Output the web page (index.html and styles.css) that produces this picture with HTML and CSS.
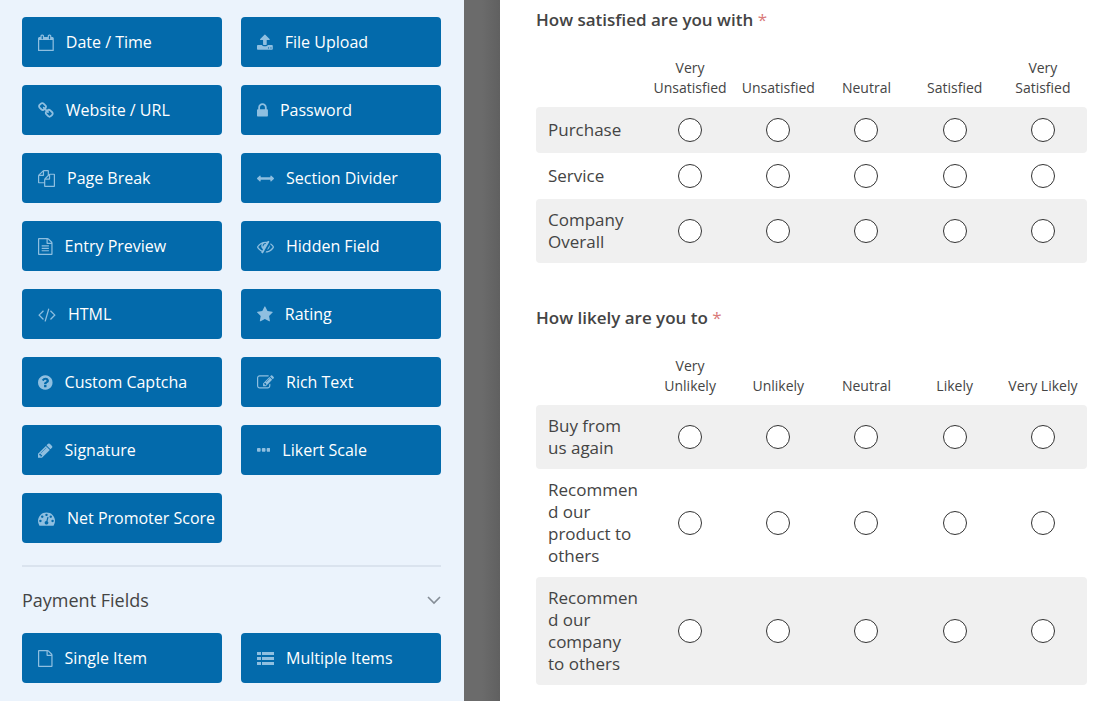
FILE: index.html
```html
<!DOCTYPE html>
<html lang="en">
<head>
    <meta charset="UTF-8">
    <meta name="viewport" content="width=device-width, initial-scale=1.0">
    <title>Form Builder</title>
    <link rel="stylesheet" href="styles.css">
</head>
<body>
    <div class="builder">
        <aside class="sidebar">
            <div class="field-grid">
                <button type="button" class="field-button">
                    <svg class="icon" viewBox="64 0 1664 1792" aria-hidden="true"><path d="M192 1664h1408v-1024h-1408v1024zm384-1152v-288q0-14-9-23t-23-9h-64q-14 0-23 9t-9 23v288q0 14 9 23t23 9h64q14 0 23-9t9-23zm768 0v-288q0-14-9-23t-23-9h-64q-14 0-23 9t-9 23v288q0 14 9 23t23 9h64q14 0 23-9t9-23zm384-64v1280q0 52-38 90t-90 38h-1408q-52 0-90-38t-38-90v-1280q0-52 38-90t90-38h128v-96q0-66 47-113t113-47h64q66 0 113 47t47 113v96h384v-96q0-66 47-113t113-47h64q66 0 113 47t47 113v96h128q52 0 90 38t38 90z"/></svg>
                    Date / Time
                </button>
                <button type="button" class="field-button">
                    <svg class="icon" viewBox="64 0 1664 1792" aria-hidden="true"><path d="M1344 1472q0-26-19-45t-45-19-45 19-19 45 19 45 45 19 45-19 19-45zm256 0q0-26-19-45t-45-19-45 19-19 45 19 45 45 19 45-19 19-45zm128-224v320q0 40-28 68t-68 28h-1472q-40 0-68-28t-28-68v-320q0-40 28-68t68-28h427q21 56 70.5 92t110.5 36h256q61 0 110.5-36t70.5-92h427q40 0 68 28t28 68zm-325-648q-17 40-59 40h-256v448q0 26-19 45t-45 19h-256q-26 0-45-19t-19-45v-448h-256q-42 0-59-40-17-39 14-69l448-448q18-19 45-19t45 19l448 448q31 30 14 69z"/></svg>
                    File Upload
                </button>
                <button type="button" class="field-button">
                    <svg class="icon" viewBox="64 0 1664 1792" aria-hidden="true"><path d="M1520 1216q0-40-28-68l-208-208q-28-28-68-28-42 0-72 32 3 3 19 18.5t21.5 21.5 15 19 13 25.5 3.5 27.5q0 40-28 68t-68 28q-15 0-27.5-3.5t-25.5-13-19-15-21.5-21.5-18.5-19q-33 31-33 73 0 40 28 68l206 207q27 27 68 27 40 0 68-26l147-146q28-28 28-67zm-703-705q0-40-28-68l-206-207q-28-28-68-28-39 0-68 27l-147 146q-28 28-28 67 0 40 28 68l208 208q27 27 68 27 42 0 72-31-3-3-19-18.5t-21.5-21.5-15-19-13-25.5-3.5-27.5q0-40 28-68t68-28q15 0 27.5 3.5t25.5 13 19 15 21.5 21.5 18.5 19q33-31 33-73zm895 705q0 120-85 203l-147 146q-83 83-203 83-121 0-204-85l-206-207q-83-83-83-203 0-123 88-209l-88-88q-86 88-208 88-120 0-204-84l-208-208q-84-84-84-204t85-203l147-146q83-83 203-83 121 0 204 85l206 207q83 83 83 203 0 123-88 209l88 88q86-88 208-88 120 0 204 84l208 208q84 84 84 204z"/></svg>
                    Website / URL
                </button>
                <button type="button" class="field-button">
                    <svg class="icon" viewBox="320 0 1152 1792" aria-hidden="true"><path d="M640 768h512v-192q0-106-75-181t-181-75-181 75-75 181v192zm832 96v576q0 40-28 68t-68 28h-960q-40 0-68-28t-28-68v-576q0-40 28-68t68-28h32v-192q0-184 132-316t316-132 316 132 132 316v192h32q40 0 68 28t28 68z"/></svg>
                    Password
                </button>
                <button type="button" class="field-button">
                    <svg class="icon" viewBox="0 0 1792 1792" aria-hidden="true"><path d="M1696 384q40 0 68 28t28 68v1216q0 40-28 68t-68 28h-960q-40 0-68-28t-28-68v-288h-544q-40 0-68-28t-28-68v-672q0-40 20-88t48-76l408-408q28-28 76-48t88-20h416q40 0 68 28t28 68v328q68-40 128-40h416zm-544 213l-299 299h299v-299zm-640-384l-299 299h299v-299zm196 647l316-316v-416h-384v416q0 40-28 68t-68 28h-416v640h512v-256q0-40 20-88t48-76zm956 804v-1152h-384v416q0 40-28 68t-68 28h-416v640h896z"/></svg>
                    Page Break
                </button>
                <button type="button" class="field-button">
                    <svg class="icon" viewBox="0 0 1792 1792" aria-hidden="true"><path d="M1792 896q0 26-19 45l-256 256q-19 19-45 19t-45-19-19-45v-128h-1024v128q0 26-19 45t-45 19-45-19l-256-256q-19-19-19-45t19-45l256-256q19-19 45-19t45 19 19 45v128h1024v-128q0-26 19-45t45-19 45 19l256 256q19 19 19 45z"/></svg>
                    Section Divider
                </button>
                <button type="button" class="field-button">
                    <svg class="icon" viewBox="128 0 1536 1792" aria-hidden="true"><path d="M1596 380q28 28 48 76t20 88v1152q0 40-28 68t-68 28h-1344q-40 0-68-28t-28-68v-1600q0-40 28-68t68-28h896q40 0 88 20t76 48zm-444-244v376h376q-10-29-22-41l-313-313q-12-12-41-22zm384 1528v-1024h-416q-40 0-68-28t-28-68v-416h-768v1536h1280zm-1024-864q0-14 9-23t23-9h704q14 0 23 9t9 23v64q0 14-9 23t-23 9h-704q-14 0-23-9t-9-23v-64zm736 224q14 0 23 9t9 23v64q0 14-9 23t-23 9h-704q-14 0-23-9t-9-23v-64q0-14 9-23t23-9h704zm0 256q14 0 23 9t9 23v64q0 14-9 23t-23 9h-704q-14 0-23-9t-9-23v-64q0-14 9-23t23-9h704z"/></svg>
                    Entry Preview
                </button>
                <button type="button" class="field-button">
                    <svg class="icon" viewBox="0 0 1792 1792" aria-hidden="true"><path d="M555 1335l78-141q-87-63-136-159t-49-203q0-121 61-225-229 117-381 353 167 258 427 375zm389-759q0-20-14-34t-34-14q-125 0-214.5 89.5t-89.5 214.5q0 20 14 34t34 14 34-14 14-34q0-86 61-147t147-61q20 0 34-14t14-34zm363-191q0 7-1 9-106 189-316 567t-315 566l-49 89q-10 16-28 16-12 0-134-70-16-10-16-28 0-12 44-87-143-65-263.5-173t-208.5-245q-20-31-20-69t20-69q153-235 380-371t496-136q89 0 180 17l54-97q10-16 28-16 5 0 18 6t31 15.5 33 18.5 31.5 18.5 19.5 11.5q16 10 16 27zm37 447q0 139-79 253.5t-209 164.5l280-502q8 45 8 84zm448 128q0 35-20 69-39 64-109 145-150 172-347.5 267t-419.5 95l74-132q212-18 392.5-137t301.5-307q-115-179-282-294l63-112q95 64 182.5 153t144.5 184q20 34 20 69z"/></svg>
                    Hidden Field
                </button>
                <button type="button" class="field-button">
                    <svg class="icon" viewBox="-48 0 1888 1792" aria-hidden="true"><path d="M553 1399l-50 50q-10 10-23 10t-23-10l-466-466q-10-10-10-23t10-23l466-466q10-10 23-10t23 10l50 50q10 10 10 23t-10 23l-393 393 393 393q10 10 10 23t-10 23zm591-1067l-373 1291q-4 13-15.5 19.5t-23.5 2.5l-62-17q-13-4-19.5-15.5t-2.5-24.5l373-1291q4-13 15.5-19.5t23.5-2.5l62 17q13 4 19.5 15.5t2.5 24.5zm657 651l-466 466q-10 10-23 10t-23-10l-50-50q-10-10-10-23t10-23l393-393-393-393q-10-10-10-23t10-23l50-50q10-10 23-10t23 10l466 466q10 10 10 23t-10 23z"/></svg>
                    HTML
                </button>
                <button type="button" class="field-button">
                    <svg class="icon" viewBox="64 0 1664 1792" aria-hidden="true"><path d="M1728 647q0 22-26 48l-363 354 86 500q1 7 1 20 0 21-10.5 35.5t-30.5 14.5q-19 0-40-12l-449-236-449 236q-22 12-40 12-21 0-31.5-14.5t-10.5-35.5q0-6 2-20l86-500-364-354q-25-27-25-48 0-37 56-46l502-73 225-455q19-41 49-41t49 41l225 455 502 73q56 9 56 46z"/></svg>
                    Rating
                </button>
                <button type="button" class="field-button">
                    <svg class="icon" viewBox="128 0 1536 1792" aria-hidden="true"><path d="M1024 1376v-192q0-14-9-23t-23-9h-192q-14 0-23 9t-9 23v192q0 14 9 23t23 9h192q14 0 23-9t9-23zm256-672q0-88-55.5-163t-138.5-116-170-41q-243 0-371 213-15 24 8 42l132 100q7 6 19 6 16 0 25-12 53-68 86-92 34-24 86-24 48 0 85.5 26t37.5 59q0 38-20 61t-68 45q-63 28-115.5 86.5t-52.5 125.5v36q0 14 9 23t23 9h192q14 0 23-9t9-23q0-19 21.5-49.5t54.5-49.5q32-18 49-28.5t46-35 44.5-48 28-60.5 12.5-81zm384 192q0 209-103 385.5t-279.5 279.5-385.5 103-385.5-103-279.5-279.5-103-385.5 103-385.5 279.5-279.5 385.5-103 385.5 103 279.5 279.5 103 385.5z"/></svg>
                    Custom Captcha
                </button>
                <button type="button" class="field-button">
                    <svg class="icon" viewBox="0 0 1792 1792" aria-hidden="true"><path d="M888 1184l116-116-152-152-116 116v56h96v96h56zm440-720q-16-16-33 1l-350 350q-17 17-1 33t33-1l350-350q17-17 1-33zm80 594v190q0 119-84.5 203.5t-203.5 84.5h-832q-119 0-203.5-84.5t-84.5-203.5v-832q0-119 84.5-203.5t203.5-84.5h832q63 0 117 25 15 7 18 23 3 17-9 29l-49 49q-14 14-32 8-23-6-45-6h-832q-66 0-113 47t-47 113v832q0 66 47 113t113 47h832q66 0 113-47t47-113v-126q0-13 9-22l64-64q15-15 35-7t20 29zm-96-738l288 288-672 672h-288v-288zm444 132l-92 92-288-288 92-92q28-28 68-28t68 28l152 152q28 28 28 68t-28 68z"/></svg>
                    Rich Text
                </button>
                <button type="button" class="field-button">
                    <svg class="icon" viewBox="128 0 1536 1792" aria-hidden="true"><path d="M491 1536l91-91-235-235-91 91v107h128v128h107zm523-928q0-22-22-22-10 0-17 7l-542 542q-7 7-7 17 0 22 22 22 10 0 17-7l542-542q7-7 7-17zm-54-192l416 416-832 832h-416v-416zm683 96q0 53-37 90l-166 166-416-416 166-165q36-38 90-38 53 0 91 38l235 234q37 39 37 91z"/></svg>
                    Signature
                </button>
                <button type="button" class="field-button">
                    <svg class="icon" viewBox="192 0 1408 1792" aria-hidden="true"><path d="M576 736v192q0 40-28 68t-68 28h-192q-40 0-68-28t-28-68v-192q0-40 28-68t68-28h192q40 0 68 28t28 68zm512 0v192q0 40-28 68t-68 28h-192q-40 0-68-28t-28-68v-192q0-40 28-68t68-28h192q40 0 68 28t28 68zm512 0v192q0 40-28 68t-68 28h-192q-40 0-68-28t-28-68v-192q0-40 28-68t68-28h192q40 0 68 28t28 68z"/></svg>
                    Likert Scale
                </button>
                <button type="button" class="field-button">
                    <svg class="icon" viewBox="0 0 1792 1792" aria-hidden="true"><path d="M384 1152q0-53-37.5-90.5t-90.5-37.5-90.5 37.5-37.5 90.5 37.5 90.5 90.5 37.5 90.5-37.5 37.5-90.5zm192-448q0-53-37.5-90.5t-90.5-37.5-90.5 37.5-37.5 90.5 37.5 90.5 90.5 37.5 90.5-37.5 37.5-90.5zm428 481l101-382q6-26-7.5-48.5t-38.5-29.5-48 6.5-30 39.5l-101 382q-60 5-107 43.5t-63 98.5q-20 77 20 146t117 89 146-20 89-117q16-60-6-117t-72-91zm660-33q0-53-37.5-90.5t-90.5-37.5-90.5 37.5-37.5 90.5 37.5 90.5 90.5 37.5 90.5-37.5 37.5-90.5zm-640-640q0-53-37.5-90.5t-90.5-37.5-90.5 37.5-37.5 90.5 37.5 90.5 90.5 37.5 90.5-37.5 37.5-90.5zm448 192q0-53-37.5-90.5t-90.5-37.5-90.5 37.5-37.5 90.5 37.5 90.5 90.5 37.5 90.5-37.5 37.5-90.5zm320 448q0 261-141 483-19 29-54 29h-1402q-35 0-54-29-141-221-141-483 0-182 71-348t191-286 286-191 348-71 348 71 286 191 191 286 71 348z"/></svg>
                    Net Promoter Score
                </button>
            </div>

            <section class="field-group">
                <h2 class="group-heading">
                    <button type="button" class="group-toggle" aria-expanded="true">
                        Payment Fields
                        <svg class="chevron" viewBox="0 0 14 9" aria-hidden="true"><path d="M1 1l6 6 6-6"/></svg>
                    </button>
                </h2>
                <div class="field-grid">
                    <button type="button" class="field-button">
                        <svg class="icon" viewBox="128 0 1536 1792" aria-hidden="true"><path d="M1596 380q28 28 48 76t20 88v1152q0 40-28 68t-68 28h-1344q-40 0-68-28t-28-68v-1600q0-40 28-68t68-28h896q40 0 88 20t76 48zm-444-244v376h376q-10-29-22-41l-313-313q-12-12-41-22zm384 1528v-1024h-416q-40 0-68-28t-28-68v-416h-768v1536h1280z"/></svg>
                        Single Item
                    </button>
                    <button type="button" class="field-button">
                        <svg class="icon" viewBox="0 0 17 17" aria-hidden="true"><path d="M0 2h4v3H0zM5 2h12v3H5zM0 7h4v3H0zM5 7h12v3H5zM0 12h4v3H0zM5 12h12v3H5z"/></svg>
                        Multiple Items
                    </button>
                </div>
            </section>
        </aside>

        <div class="gutter"></div>

        <main class="preview">
            <section class="question">
                <h3 class="question-title" id="satisfied">How satisfied are you with <span class="required">*</span></h3>
                <table class="likert" aria-labelledby="satisfied">
                    <thead>
                        <tr>
                            <td class="corner"></td>
                            <th scope="col">Very Unsatisfied</th>
                            <th scope="col">Unsatisfied</th>
                            <th scope="col">Neutral</th>
                            <th scope="col">Satisfied</th>
                            <th scope="col">Very Satisfied</th>
                        </tr>
                    </thead>
                    <tbody>
                        <tr>
                            <th scope="row">Purchase</th>
                            <td><input type="radio" name="purchase" aria-label="Purchase: Very Unsatisfied"></td>
                            <td><input type="radio" name="purchase" aria-label="Purchase: Unsatisfied"></td>
                            <td><input type="radio" name="purchase" aria-label="Purchase: Neutral"></td>
                            <td><input type="radio" name="purchase" aria-label="Purchase: Satisfied"></td>
                            <td><input type="radio" name="purchase" aria-label="Purchase: Very Satisfied"></td>
                        </tr>
                        <tr>
                            <th scope="row">Service</th>
                            <td><input type="radio" name="service" aria-label="Service: Very Unsatisfied"></td>
                            <td><input type="radio" name="service" aria-label="Service: Unsatisfied"></td>
                            <td><input type="radio" name="service" aria-label="Service: Neutral"></td>
                            <td><input type="radio" name="service" aria-label="Service: Satisfied"></td>
                            <td><input type="radio" name="service" aria-label="Service: Very Satisfied"></td>
                        </tr>
                        <tr>
                            <th scope="row">Company Overall</th>
                            <td><input type="radio" name="company" aria-label="Company Overall: Very Unsatisfied"></td>
                            <td><input type="radio" name="company" aria-label="Company Overall: Unsatisfied"></td>
                            <td><input type="radio" name="company" aria-label="Company Overall: Neutral"></td>
                            <td><input type="radio" name="company" aria-label="Company Overall: Satisfied"></td>
                            <td><input type="radio" name="company" aria-label="Company Overall: Very Satisfied"></td>
                        </tr>
                    </tbody>
                </table>
            </section>

            <section class="question">
                <h3 class="question-title" id="likely">How likely are you to <span class="required">*</span></h3>
                <table class="likert" aria-labelledby="likely">
                    <thead>
                        <tr>
                            <td class="corner"></td>
                            <th scope="col">Very Unlikely</th>
                            <th scope="col">Unlikely</th>
                            <th scope="col">Neutral</th>
                            <th scope="col">Likely</th>
                            <th scope="col">Very Likely</th>
                        </tr>
                    </thead>
                    <tbody>
                        <tr>
                            <th scope="row">Buy from us again</th>
                            <td><input type="radio" name="buy" aria-label="Buy from us again: Very Unlikely"></td>
                            <td><input type="radio" name="buy" aria-label="Buy from us again: Unlikely"></td>
                            <td><input type="radio" name="buy" aria-label="Buy from us again: Neutral"></td>
                            <td><input type="radio" name="buy" aria-label="Buy from us again: Likely"></td>
                            <td><input type="radio" name="buy" aria-label="Buy from us again: Very Likely"></td>
                        </tr>
                        <tr>
                            <th scope="row">Recommend our product to others</th>
                            <td><input type="radio" name="product" aria-label="Recommend our product: Very Unlikely"></td>
                            <td><input type="radio" name="product" aria-label="Recommend our product: Unlikely"></td>
                            <td><input type="radio" name="product" aria-label="Recommend our product: Neutral"></td>
                            <td><input type="radio" name="product" aria-label="Recommend our product: Likely"></td>
                            <td><input type="radio" name="product" aria-label="Recommend our product: Very Likely"></td>
                        </tr>
                        <tr>
                            <th scope="row">Recommend our company to others</th>
                            <td><input type="radio" name="recommend" aria-label="Recommend our company: Very Unlikely"></td>
                            <td><input type="radio" name="recommend" aria-label="Recommend our company: Unlikely"></td>
                            <td><input type="radio" name="recommend" aria-label="Recommend our company: Neutral"></td>
                            <td><input type="radio" name="recommend" aria-label="Recommend our company: Likely"></td>
                            <td><input type="radio" name="recommend" aria-label="Recommend our company: Very Likely"></td>
                        </tr>
                    </tbody>
                </table>
            </section>
        </main>
    </div>
</body>
</html>
```

FILE: styles.css
```css
:root {
    --blue: #036aab;
    --pale-blue: #ebf3fc;
    --text: #444444;
    --stripe: #f0f0f0;
}

* {
    margin: 0;
    padding: 0;
    box-sizing: border-box;
}

body {
    font-family: 'Segoe UI', 'Open Sans', 'Noto Sans', sans-serif;
    color: var(--text);
    background-color: #ffffff;
}

.builder {
    display: flex;
    min-height: 100vh;
}

/* Field list */
.sidebar {
    flex: 0 0 464px;
    padding: 17px 23px 16px 22px;
    background-color: var(--pale-blue);
}

.field-grid {
    display: grid;
    grid-template-columns: 1fr 1fr;
    gap: 18px 19px;
}

.field-button {
    display: flex;
    align-items: center;
    gap: 12px;
    height: 50px;
    padding: 0 0 0 16px;
    border: none;
    border-radius: 4px;
    background-color: var(--blue);
    color: #ffffff;
    font-family: inherit;
    font-size: 16px;
    line-height: 24px;
    white-space: nowrap;
    cursor: pointer;
}

.field-button:hover {
    background-color: #215d8f;
}

.icon {
    flex: none;
    height: 17px;
    fill: #8fbfe0;
}

.field-group {
    margin-top: 22px;
    border-top: 2px solid #dae3ee;
}

.group-heading {
    padding: 20px 0;
}

.group-toggle {
    display: flex;
    align-items: center;
    justify-content: space-between;
    width: 100%;
    border: none;
    background: none;
    color: var(--text);
    font-family: inherit;
    font-size: 18px;
    font-weight: 500;
    line-height: 26px;
    cursor: pointer;
}

.chevron {
    width: 14px;
    height: 9px;
    fill: none;
    stroke: #858d96;
    stroke-width: 1.6;
}

.gutter {
    flex: 0 0 36px;
    background: linear-gradient(to right, #6b6b6b 50%, #606060);
}

/* Form preview */
.preview {
    flex: 1;
    min-width: 0;
    padding: 8px 29px 16px 36px;
}

.question + .question {
    margin-top: 43px;
}

.question-title {
    margin-bottom: 16px;
    font-size: 17px;
    font-weight: 600;
    line-height: 24px;
}

.required {
    color: #d97a7a;
    font-weight: 400;
}

.likert {
    width: 100%;
    table-layout: fixed;
    border-collapse: separate;
    border-spacing: 0;
}

.likert .corner {
    width: 110px;
}

.likert thead th {
    padding: 10px 4px 9px;
    font-size: 14px;
    font-weight: 400;
    line-height: 20px;
    text-align: center;
    vertical-align: bottom;
}

.likert tbody th {
    padding: 10px 7px 10px 12px;
    font-size: 17px;
    font-weight: 400;
    line-height: 22px;
    text-align: left;
    overflow-wrap: anywhere;
}

.likert tbody td {
    padding: 11px 0;
    text-align: center;
    vertical-align: middle;
}

.likert tbody tr:nth-child(odd) > * {
    background-color: var(--stripe);
}

.likert tbody th {
    border-radius: 4px 0 0 4px;
}

.likert tbody td:last-child {
    border-radius: 0 4px 4px 0;
}

.likert input {
    appearance: none;
    display: block;
    width: 24px;
    height: 24px;
    margin: 0 auto;
    border: 1px solid #333333;
    border-radius: 50%;
    background-color: #ffffff;
    cursor: pointer;
}

.likert input:checked {
    box-shadow: inset 0 0 0 5px #ffffff;
    background-color: var(--blue);
}
```
